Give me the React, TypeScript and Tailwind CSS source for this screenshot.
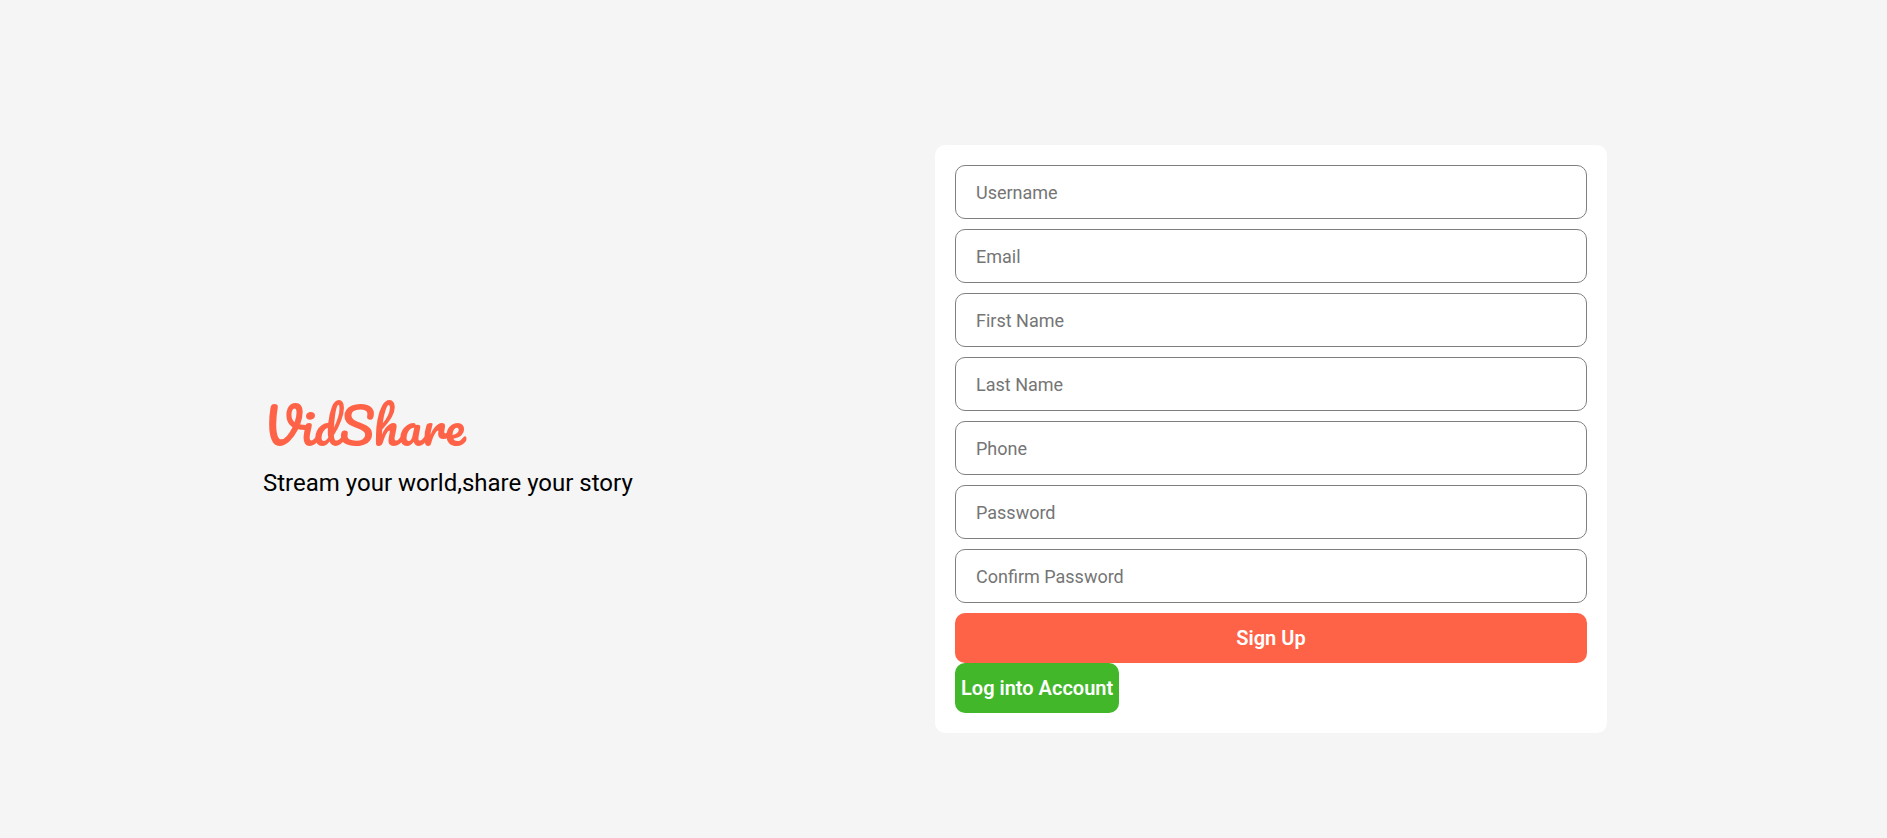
const fields = [
  { name: "username", label: "Username", type: "text" },
  { name: "email", label: "Email", type: "email" },
  { name: "firstName", label: "First Name", type: "text" },
  { name: "lastName", label: "Last Name", type: "text" },
  { name: "phone", label: "Phone", type: "tel" },
  { name: "password", label: "Password", type: "password" },
  { name: "confirmPassword", label: "Confirm Password", type: "password" },
];

function Brand() {
  return (
    <section className="flex flex-col justify-center">
      <h1 className="font-[Pacifico,Lato,cursive] text-[50px] leading-[88px] font-normal text-[#ff6347]">
        VidShare
      </h1>
      <p className="text-2xl leading-7 text-black">Stream your world,share your story</p>
    </section>
  );
}

function SignUpForm() {
  return (
    <form className="flex flex-col rounded-[10px] bg-white p-5" onSubmit={(e) => e.preventDefault()}>
      <div className="flex flex-col gap-2.5">
        {fields.map((field) => (
          <input
            key={field.name}
            name={field.name}
            type={field.type}
            aria-label={field.label}
            placeholder={field.label}
            className="h-[54px] w-full rounded-[10px] border border-[#808080] bg-white px-5 text-lg text-black placeholder:text-[#757575]"
          />
        ))}
        <button type="submit" className="h-[50px] rounded-[10px] bg-[#ff6347] text-xl font-semibold text-white">
          Sign Up
        </button>
      </div>
      <button
        type="button"
        className="h-[50px] self-start rounded-[10px] bg-[#42b72a] px-1.5 text-xl font-semibold text-white"
      >
        Log into Account
      </button>
    </form>
  );
}

export default function App() {
  return (
    <main className="flex min-h-screen items-center justify-center bg-[#f5f5f5] pt-10 pr-[17px] font-[Roboto,sans-serif]">
      <div className="grid w-full max-w-[1344px] grid-cols-1 md:grid-cols-2">
        <Brand />
        <SignUpForm />
      </div>
    </main>
  );
}
